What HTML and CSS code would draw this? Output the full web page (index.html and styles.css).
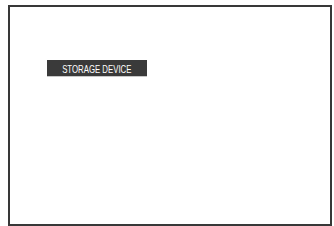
FILE: index.html
```html
<!DOCTYPE html>
<html lang="en">
<head>
    <meta charset="UTF-8">
    <title>Storage device</title>
    <link rel="stylesheet" href="styles.css">
</head>
<body>
    <div class="frame">
        <div class="device-label"><span>STORAGE DEVICE</span></div>
    </div>
</body>
</html>
```
FILE: styles.css
```css
body {
    margin: 0;
    padding: 5px 2px 0 8px;
    background-color: #ffffff;
    font-family: "Liberation Sans", Arial, sans-serif;
}
.frame {
    width: 324px;
    height: 221px;
    border: 2px solid #383838;
    box-sizing: border-box;
    padding: 53px 0 0 37px;
}
.device-label {
    width: 100px;
    height: 16px;
    line-height: 18px;
    background-color: #3a3a3a;
    border-bottom: 1px solid #c8c8c8;
    color: #ffffff;
    font-size: 11px;
    text-align: center;
    overflow: hidden;
}
.device-label span {
    display: inline-block;
    transform: scaleX(0.71);
}
```
